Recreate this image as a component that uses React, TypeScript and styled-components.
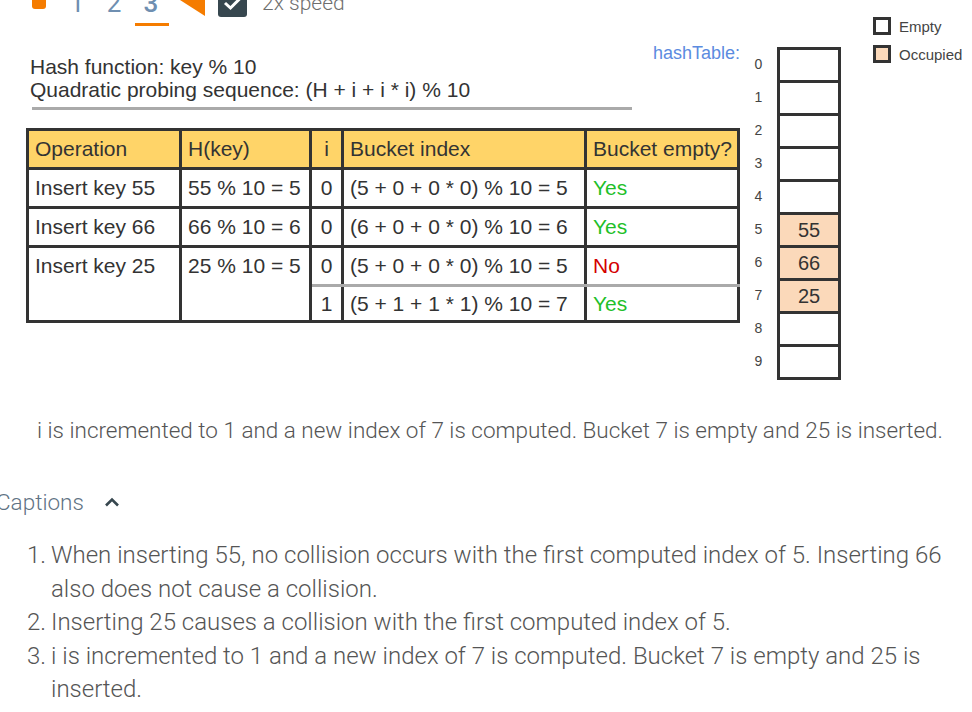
import React from "react";
import styled, { createGlobalStyle } from "styled-components";

const GlobalStyle = createGlobalStyle`
  html, body {
    margin: 0;
    padding: 0;
    background: #ffffff;
    overflow: hidden;
  }
  body {
    font-family: "Liberation Sans", Arial, sans-serif;
  }
`;

const Page = styled.div`
  width: 972px;
  height: 712px;
  overflow: hidden;
`;

/* the page is scrolled a little, so the player bar is cut at the top */
const TopBar = styled.div`
  display: flex;
  align-items: flex-start;
  height: 31px;
  margin-top: -14px;
  padding-left: 32px;
`;

const StopSquare = styled.div`
  width: 14px;
  height: 14px;
  border-radius: 3px;
  background: #f57c00;
  margin-top: 9px;
`;

const Steps = styled.div`
  display: flex;
  margin-left: 14px;
  margin-top: 2px;
`;

const Step = styled.span<{ $active?: boolean }>`
  position: relative;
  width: 34px;
  margin-right: ${(p) => (p.$active ? "0" : "3px")};
  text-align: center;
  font-family: Roboto, sans-serif;
  font-size: 26px;
  font-weight: ${(p) => (p.$active ? 500 : 400)};
  color: #6f8fb1;
  line-height: 30px;

  &::after {
    content: "";
    display: ${(p) => (p.$active ? "block" : "none")};
    position: absolute;
    left: 1px;
    right: -1px;
    top: 35px;
    height: 3px;
    background: #f57c00;
  }
`;

const BackButton = styled.svg`
  margin-left: 12px;
  margin-top: -2px;
  flex-shrink: 0;
`;

const CheckBox = styled.div`
  width: 29px;
  height: 29px;
  margin-left: 13px;
  margin-top: 2px;
  border-radius: 3px;
  background: #37474f;
  display: flex;
  align-items: center;
  justify-content: center;
`;

const SpeedLabel = styled.span`
  margin-left: 15px;
  margin-top: 5px;
  font-family: Roboto, sans-serif;
  font-weight: 300;
  font-size: 21px;
  line-height: 24px;
  color: #6e6e6e;
`;

const Main = styled.div`
  display: flex;
  align-items: flex-start;
  padding-left: 26px;
  height: 363px;
`;

const LeftCol = styled.div`
  width: 714px;
  flex-shrink: 0;
  margin-top: 38px;
`;

const InfoText = styled.div`
  padding-left: 4px;
  font-size: 21px;
  line-height: 23px;
  color: #333333;
`;

const Rule = styled.div`
  width: 600px;
  height: 3px;
  margin: 6px 0 0 6px;
  background: #aaaaaa;
`;

const Table = styled.table`
  margin-top: 18px;
  border-collapse: collapse;
  table-layout: fixed;
  width: 714px;
  font-size: 21px;
  color: #333333;
`;

const HeadCell = styled.th<{ $center?: boolean }>`
  height: 36px;
  padding: 0 6px;
  border: 3px solid #333333;
  background: #ffd468;
  font-weight: 400;
  text-align: ${(p) => (p.$center ? "center" : "left")};
  white-space: nowrap;
  overflow: hidden;
`;

const Cell = styled.td<{
  $center?: boolean;
  $color?: string;
  $split?: boolean;
  $top?: boolean;
  $short?: boolean;
}>`
  height: ${(p) => (p.$short ? "33px" : "36px")};
  padding: 0 6px;
  border: 3px solid #333333;
  ${(p) => (p.$split ? "border-bottom-color: #aaaaaa;" : "")}
  text-align: ${(p) => (p.$center ? "center" : "left")};
  vertical-align: ${(p) => (p.$top ? "top" : "middle")};
  ${(p) => (p.$top ? "padding-top: 6px;" : "")}
  color: ${(p) => p.$color || "#333333"};
  white-space: nowrap;
  overflow: hidden;
`;

const HashArea = styled.div`
  display: flex;
  align-items: flex-start;
  margin-left: -88px;
  margin-top: 24px;
`;

const HashLabel = styled.div`
  width: 88px;
  margin-top: 2px;
  text-align: right;
  font-size: 18px;
  line-height: 20px;
  color: #5b8be0;
`;

const IndexCol = styled.div`
  width: 37px;
  margin-top: 7px;
  display: flex;
  flex-direction: column;
`;

const IndexNum = styled.div`
  height: 33px;
  line-height: 33px;
  text-align: center;
  font-size: 14px;
  color: #444444;
`;

const BucketCol = styled.div`
  margin-top: 6px;
  display: flex;
  flex-direction: column;
`;

const Bucket = styled.div<{ $filled?: boolean }>`
  box-sizing: border-box;
  width: 64px;
  height: 36px;
  border: 3px solid #333333;
  & + & {
    margin-top: -3px;
  }
  background: ${(p) => (p.$filled ? "#fbd9ba" : "#ffffff")};
  display: flex;
  align-items: center;
  justify-content: center;
  font-size: 20px;
  color: #333333;
`;

const Legend = styled.div`
  margin-left: 32px;
  display: flex;
  flex-direction: column;
  gap: 10px;
`;

const LegendRow = styled.div`
  display: flex;
  align-items: center;
  gap: 8px;
  font-size: 15px;
  color: #444444;
`;

const LegendBox = styled.div<{ $filled?: boolean }>`
  box-sizing: border-box;
  width: 18px;
  height: 18px;
  border: 3px solid #333333;
  background: ${(p) => (p.$filled ? "#fbd9ba" : "#ffffff")};
`;

const StepCaption = styled.div`
  margin-top: 35px;
  padding-left: 8px;
  text-align: center;
  font-family: Roboto, sans-serif;
  font-weight: 300;
  font-size: 22.5px;
  line-height: 30px;
  color: #555555;
  white-space: nowrap;
`;

const CaptionsHeader = styled.div`
  margin-top: 42px;
  margin-left: -4px;
  display: flex;
  align-items: center;
  gap: 20px;
  font-family: Roboto, sans-serif;
  font-weight: 300;
  font-size: 22.5px;
  line-height: 30px;
  color: #5f7384;
`;

const CaptionList = styled.ol`
  list-style: none;
  margin: 22px 0 0 0;
  padding: 0 0 0 27px;
  font-family: Roboto, sans-serif;
  font-weight: 300;
  font-size: 24px;
  line-height: 33.5px;
  color: #555555;
`;

const CaptionItem = styled.li`
  display: flex;
`;

const Marker = styled.span`
  width: 24px;
  flex-shrink: 0;
`;

const ItemText = styled.span`
  width: 893px;
`;

const rows = [
  { op: "Insert key 55", h: "55 % 10 = 5", i: "0", idx: "(5 + 0 + 0 * 0) % 10 = 5", empty: "Yes" },
  { op: "Insert key 66", h: "66 % 10 = 6", i: "0", idx: "(6 + 0 + 0 * 0) % 10 = 6", empty: "Yes" },
];

const buckets = ["", "", "", "", "", "55", "66", "25", "", ""];

const captions = [
  "When inserting 55, no collision occurs with the first computed index of 5. Inserting 66 also does not cause a collision.",
  "Inserting 25 causes a collision with the first computed index of 5.",
  "i is incremented to 1 and a new index of 7 is computed. Bucket 7 is empty and 25 is inserted.",
];

const GREEN = "#1fbf2a";
const RED = "#d40000";

export default function App() {
  return (
    <Page>
      <GlobalStyle />
      <TopBar>
        <StopSquare />
        <Steps>
          <Step>1</Step>
          <Step>2</Step>
          <Step $active>3</Step>
        </Steps>
        <BackButton width="25" height="32" viewBox="0 0 25 32">
          <polygon points="0,16 25,0 25,32" fill="#f57c00" />
        </BackButton>
        <CheckBox>
          <svg width="20" height="16" viewBox="0 0 20 16">
            <polyline points="2,8 7.5,13 18,2.5" fill="none" stroke="#ffffff" strokeWidth="3" />
          </svg>
        </CheckBox>
        <SpeedLabel>2x speed</SpeedLabel>
      </TopBar>

      <Main>
        <LeftCol>
          <InfoText>
            <div>Hash function: key % 10</div>
            <div>Quadratic probing sequence: (H + i + i * i) % 10</div>
          </InfoText>
          <Rule />
          <Table>
            <colgroup>
              <col style={{ width: 153 }} />
              <col style={{ width: 130 }} />
              <col style={{ width: 32 }} />
              <col style={{ width: 243 }} />
              <col style={{ width: 153 }} />
            </colgroup>
            <thead>
              <tr>
                <HeadCell>Operation</HeadCell>
                <HeadCell>H(key)</HeadCell>
                <HeadCell $center>i</HeadCell>
                <HeadCell>Bucket index</HeadCell>
                <HeadCell>Bucket empty?</HeadCell>
              </tr>
            </thead>
            <tbody>
              {rows.map((r) => (
                <tr key={r.op}>
                  <Cell>{r.op}</Cell>
                  <Cell>{r.h}</Cell>
                  <Cell $center>{r.i}</Cell>
                  <Cell>{r.idx}</Cell>
                  <Cell $color={GREEN}>{r.empty}</Cell>
                </tr>
              ))}
              <tr>
                <Cell rowSpan={2} $top>
                  Insert key 25
                </Cell>
                <Cell rowSpan={2} $top>
                  25 % 10 = 5
                </Cell>
                <Cell $center $split>
                  0
                </Cell>
                <Cell $split>(5 + 0 + 0 * 0) % 10 = 5</Cell>
                <Cell $split $color={RED}>
                  No
                </Cell>
              </tr>
              <tr>
                <Cell $center $short>
                  1
                </Cell>
                <Cell $short>(5 + 1 + 1 * 1) % 10 = 7</Cell>
                <Cell $short $color={GREEN}>
                  Yes
                </Cell>
              </tr>
            </tbody>
          </Table>
        </LeftCol>

        <HashArea>
          <HashLabel>hashTable:</HashLabel>
          <IndexCol>
            {buckets.map((_, n) => (
              <IndexNum key={n}>{n}</IndexNum>
            ))}
          </IndexCol>
          <BucketCol>
            {buckets.map((v, n) => (
              <Bucket key={n} $filled={v !== ""}>
                {v}
              </Bucket>
            ))}
          </BucketCol>
        </HashArea>

        <Legend>
          <LegendRow>
            <LegendBox />
            Empty
          </LegendRow>
          <LegendRow>
            <LegendBox $filled />
            Occupied
          </LegendRow>
        </Legend>
      </Main>

      <StepCaption>
        i is incremented to 1 and a new index of 7 is computed. Bucket 7 is empty and 25 is inserted.
      </StepCaption>

      <CaptionsHeader>
        <span>Captions</span>
        <svg width="16" height="10" viewBox="0 0 16 10">
          <polyline points="2,8.5 8,2.5 14,8.5" fill="none" stroke="#37474f" strokeWidth="2.6" />
        </svg>
      </CaptionsHeader>

      <CaptionList>
        {captions.map((c, n) => (
          <CaptionItem key={n}>
            <Marker>{n + 1}.</Marker>
            <ItemText>{c}</ItemText>
          </CaptionItem>
        ))}
      </CaptionList>
    </Page>
  );
}
